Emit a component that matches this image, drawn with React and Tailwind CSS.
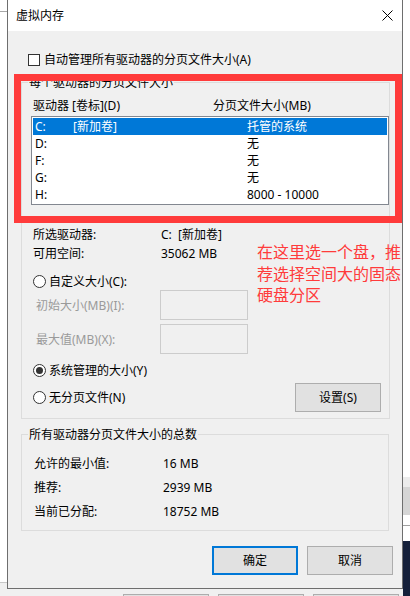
import React from "react";

const font = { fontFamily: '"Noto Sans", "Noto Sans CJK SC", sans-serif' };

function Radio({ checked, label }) {
  return (
    <div className="flex items-center gap-[3px] h-[17px] pl-[2px]">
      <span className="w-[13px] h-[13px] rounded-full border border-[#333] bg-white flex items-center justify-center">
        {checked && <span className="w-[7px] h-[7px] rounded-full bg-[#333]" />}
      </span>
      <span>{label}</span>
    </div>
  );
}

function Btn({ children, primary }) {
  return (
    <div
      className={
        "w-[86px] h-[29px] bg-[#e1e1e1] flex items-center justify-center " +
        (primary ? "border-2 border-[#0078d7]" : "border border-[#adadad]")
      }
    >
      {children}
    </div>
  );
}

const drives = [
  { d: "C:", v: "[新加卷]", s: "托管的系统", sel: true },
  { d: "D:", v: "", s: "无" },
  { d: "F:", v: "", s: "无" },
  { d: "G:", v: "", s: "无" },
  { d: "H:", v: "", s: "8000 - 10000" },
];

export default function App() {
  return (
    <div className="relative w-[410px] h-[596px] bg-white overflow-hidden flex flex-col text-[12px] leading-[17px] text-black" style={font}>
      <div className="flex h-[589px]">
        {/* window behind, left edge */}
        <div className="w-[7px] flex flex-col">
          <div className="h-[11px] bg-white" />
          <div className="h-px bg-[#a8a8a8]" />
          <div className="flex-1 bg-white" />
          <div className="h-px bg-[#c8c8c8]" />
          <div className="h-[6px] bg-[#f0f0f0]" />
        </div>

        {/* dialog */}
        <div className="w-[396px] flex flex-col border-l border-r border-b border-[#6e6e6e]">
          <div className="h-[31px] bg-white flex items-center justify-between pl-[8px] pr-[9px]">
            <span>虚拟内存</span>
            <svg width="11" height="11" viewBox="0 0 11 11">
              <path d="M0.5 0.5 L10.5 10.5 M10.5 0.5 L0.5 10.5" stroke="#000" strokeWidth="1" />
            </svg>
          </div>

          <div className="flex-1 bg-[#f0f0f0] flex flex-col pt-[20px]">
            <div className="flex items-center gap-[4px] h-[17px] pl-[20px]">
              <span className="w-[12px] h-[12px] border border-[#333] bg-white" />
              <span>自动管理所有驱动器的分页文件大小(A)</span>
            </div>

            <fieldset className="ml-[13px] mt-[6px] w-[368px] border border-[#dcdcdc]">
              <legend className="ml-[6px] px-[1px] leading-[17px]">每个驱动器的分页文件大小</legend>
              <div className="pl-[9px] pt-[6px] pb-[6px] flex flex-col">
                <div className="flex h-[17px] items-center pl-[2px]">
                  <span className="w-[180px]">驱动器 [卷标](D)</span>
                  <span>分页文件大小(MB)</span>
                </div>
                <div className="mt-[2px] w-[358px] h-[89px] border border-[#828790] bg-white p-px">
                  {drives.map((r) => (
                    <div
                      key={r.d}
                      className={
                        "flex h-[17px] items-center pl-[2px] " +
                        (r.sel ? "bg-[#0078d7] text-white" : "")
                      }
                    >
                      <span className="w-[38px]">{r.d}</span>
                      <span className="w-[174px]">{r.v}</span>
                      <span>{r.s}</span>
                    </div>
                  ))}
                </div>

                <div className="mt-[20px] flex h-[19px] items-center pl-[2px]">
                  <span className="w-[128px]">所选驱动器:</span>
                  <span>C:&nbsp;&nbsp;[新加卷]</span>
                </div>
                <div className="flex h-[19px] items-center pl-[2px]">
                  <span className="w-[128px]">可用空间:</span>
                  <span>35062 MB</span>
                </div>

                <div className="mt-[10px]">
                  <Radio label="自定义大小(C):" />
                </div>
                <div className="flex h-[30px] items-center pl-[5px] text-[#9a9a9a]">
                  <span className="w-[124px]">初始大小(MB)(I):</span>
                  <span className="w-[88px] h-[30px] border border-[#cccccc] bg-[#f0f0f0]" />
                </div>
                <div className="mt-[4px] flex h-[30px] items-center pl-[5px] text-[#9a9a9a]">
                  <span className="w-[124px]">最大值(MB)(X):</span>
                  <span className="w-[88px] h-[30px] border border-[#cccccc] bg-[#f0f0f0]" />
                </div>

                <div className="mt-[8px]">
                  <Radio checked label="系统管理的大小(Y)" />
                </div>
                <div className="mt-[4px] flex h-[29px] items-center pr-[8px]">
                  <Radio label="无分页文件(N)" />
                  <div className="ml-auto">
                    <Btn>设置(S)</Btn>
                  </div>
                </div>
              </div>
            </fieldset>

            <fieldset className="ml-[13px] mt-[7px] w-[368px] border border-[#dcdcdc]">
              <legend className="ml-[6px] px-[1px] leading-[17px]">所有驱动器分页文件大小的总数</legend>
              <div className="pl-[12px] pt-[12px] pb-[10px] flex flex-col gap-[7px]">
                <div className="flex h-[17px] items-center">
                  <span className="w-[129px]">允许的最小值:</span>
                  <span>16 MB</span>
                </div>
                <div className="flex h-[17px] items-center">
                  <span className="w-[129px]">推荐:</span>
                  <span>2939 MB</span>
                </div>
                <div className="flex h-[17px] items-center">
                  <span className="w-[129px]">当前已分配:</span>
                  <span>18752 MB</span>
                </div>
              </div>
            </fieldset>

            <div className="mt-[15px] flex justify-end gap-[9px] pr-[9px]">
              <Btn primary>确定</Btn>
              <Btn>取消</Btn>
            </div>
          </div>
        </div>

        {/* window behind, right edge */}
        <div className="w-[7px] flex flex-col">
          <div className="h-[477px] bg-white" />
          <div className="h-[10px] bg-[#ececec]" />
          <div className="h-[28px] bg-[#d5d5d5]" />
          <div className="h-[10px] bg-white" />
          <div className="h-px bg-[#a0a0a0]" />
          <div className="h-[15px] bg-white" />
          <div className="flex-1 bg-[#15203a]" />
        </div>
      </div>

      {/* strip below the dialog */}
      <div className="flex h-[7px]">
        <div className="w-[403px] bg-[#f0f0f0] flex gap-[9px] pl-[123px] pt-[5px] overflow-hidden">
          <div className="w-[86px] h-[10px] shrink-0 border border-[#adadad] bg-[#e1e1e1]" />
          <div className="w-[86px] h-[10px] shrink-0 border border-[#adadad] bg-[#e1e1e1]" />
          <div className="w-[86px] h-[10px] shrink-0 border border-[#adadad] bg-[#e1e1e1]" />
        </div>
        <div className="w-[7px] bg-[#15203a]" />
      </div>

      {/* annotation over the screenshot */}
      <div className="absolute left-[14px] top-[74px] w-[388px] h-[149px] border-[7px] border-[#ff3b3b]" />
      <div
        className="absolute left-[257px] top-[241px] text-[16px] leading-[21.5px] text-[#ff3b3b] whitespace-nowrap"
        style={{ fontFamily: '"Noto Sans CJK SC", sans-serif' }}
      >
        在这里选一个盘，推
        <br />
        荐选择空间大的固态
        <br />
        硬盘分区
      </div>
    </div>
  );
}
